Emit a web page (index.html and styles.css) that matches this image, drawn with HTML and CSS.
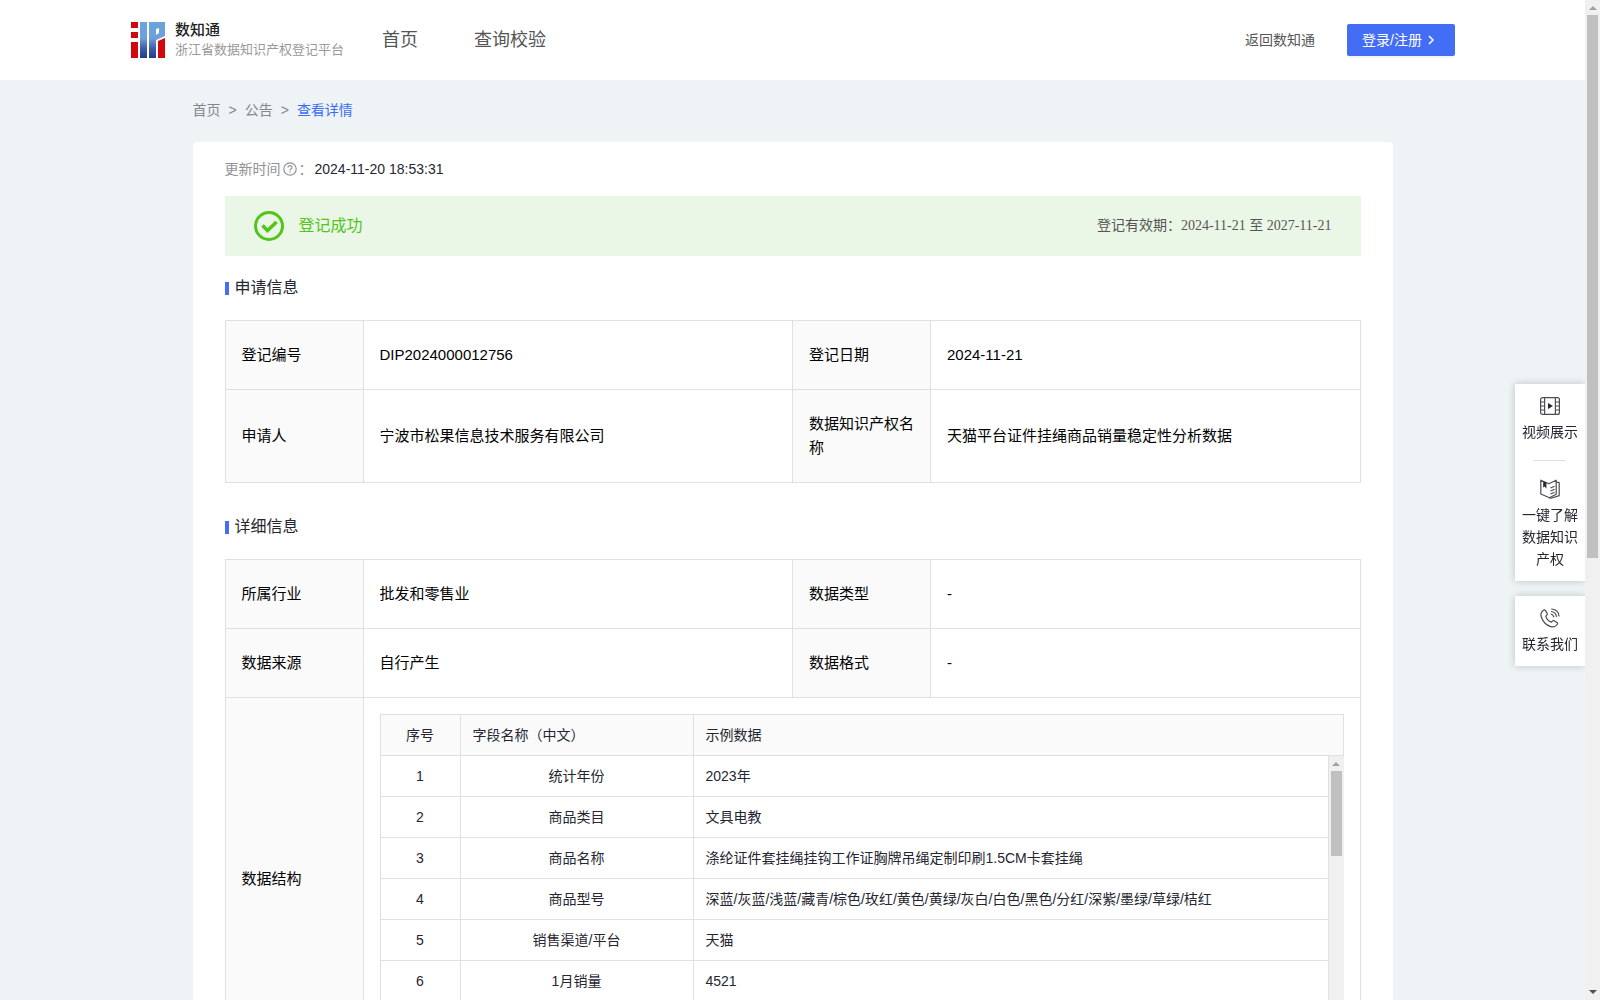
FILE: index.html
```html
<!DOCTYPE html>
<html lang="zh-CN">
<head>
    <meta charset="UTF-8">
    <meta name="viewport" content="width=device-width, initial-scale=1.0">
    <title>浙江省数据知识产权登记平台</title>
    <link rel="stylesheet" href="styles.css">
</head>
<body>
    <div class="window">
        <div class="page">
            <!-- Header -->
            <header class="header">
                <a class="logo" href="#">
                    <svg width="34" height="36" viewBox="0 0 34 36">
                        <defs>
                            <linearGradient id="blue" x1="0" y1="0" x2="0" y2="1">
                                <stop offset="0" stop-color="#6ba3dd"/>
                                <stop offset="0.45" stop-color="#6f9fd8"/>
                                <stop offset="0.75" stop-color="#3a5ba8"/>
                                <stop offset="1" stop-color="#263c86"/>
                            </linearGradient>
                        </defs>
                        <path fill="#d3080f" d="M0 0h7v6H0zM0 10h7v6H0zM0 20h7v16H0zM27 19l7-3v20h-7z"/>
                        <path fill="url(#blue)" d="M9 0h7v36H9zM18 0h16v14l-9 4v18h-7zM25 7v6l3-2V6z" fill-rule="evenodd"/>
                    </svg>
                    <span class="logo-text">
                        <strong>数知通</strong>
                        <span>浙江省数据知识产权登记平台</span>
                    </span>
                </a>
                <nav class="nav">
                    <a href="#">首页</a>
                    <a href="#">查询校验</a>
                </nav>
                <div class="user">
                    <a href="#">返回数知通</a>
                    <button type="button" class="login">登录/注册
                        <svg width="8" height="10" viewBox="0 0 8 10"><path d="M2 1l4 4-4 4" fill="none" stroke="#fff" stroke-width="1.5"/></svg>
                    </button>
                </div>
            </header>

            <main class="container">
                <!-- Breadcrumb -->
                <div class="breadcrumb">
                    <a href="#">首页</a><span>&gt;</span><a href="#">公告</a><span>&gt;</span><a href="#" class="current">查看详情</a>
                </div>

                <div class="card">
                    <div class="update">
                        <span>更新时间</span>
                        <svg width="14" height="14" viewBox="0 0 14 14" fill="none" stroke="#909297" stroke-width="1.2">
                            <circle cx="7" cy="7" r="6.2"/>
                            <path d="M5 5.6c0-2.6 4-2.6 4 0C9 7 7 6.900 7 8.500"/>
                            <path d="M7 9.500v1.200"/>
                        </svg>
                        <span>：</span>
                        <time>2024-11-20 18:53:31</time>
                    </div>

                    <div class="banner">
                        <svg width="30" height="30" viewBox="0 0 30 30" fill="none" stroke="#52c41a">
                            <circle cx="15" cy="15" r="13.500" stroke-width="3"/>
                            <path d="M8.500 14.500l5 5 9-8.500" stroke-width="3.600"/>
                        </svg>
                        <span class="status">登记成功</span>
                        <span class="validity">登记有效期：<span>2024-11-21 至 2027-11-21</span></span>
                    </div>

                    <!-- Application info -->
                    <h2>申请信息</h2>
                    <table class="info">
                        <colgroup><col class="label"><col><col class="label"><col></colgroup>
                        <tr>
                            <th>登记编号</th>
                            <td>DIP2024000012756</td>
                            <th>登记日期</th>
                            <td>2024-11-21</td>
                        </tr>
                        <tr>
                            <th>申请人</th>
                            <td>宁波市松果信息技术服务有限公司</td>
                            <th>数据知识产权名称</th>
                            <td>天猫平台证件挂绳商品销量稳定性分析数据</td>
                        </tr>
                    </table>

                    <!-- Detail info -->
                    <h2>详细信息</h2>
                    <table class="info">
                        <colgroup><col class="label"><col><col class="label"><col></colgroup>
                        <tr>
                            <th>所属行业</th>
                            <td>批发和零售业</td>
                            <th>数据类型</th>
                            <td>-</td>
                        </tr>
                        <tr>
                            <th>数据来源</th>
                            <td>自行产生</td>
                            <th>数据格式</th>
                            <td>-</td>
                        </tr>
                        <tr>
                            <th>数据结构</th>
                            <td colspan="3" class="nested">
                                <table class="fields fields-head">
                                    <colgroup><col class="no"><col class="name"><col></colgroup>
                                    <tr><th class="center">序号</th><th>字段名称（中文）</th><th>示例数据</th></tr>
                                </table>
                                <div class="fields-body">
                                    <table class="fields">
                                        <colgroup><col class="no"><col class="name"><col></colgroup>
                                        <tr><td>1</td><td>统计年份</td><td>2023年</td></tr>
                                        <tr><td>2</td><td>商品类目</td><td>文具电教</td></tr>
                                        <tr><td>3</td><td>商品名称</td><td>涤纶证件套挂绳挂钩工作证胸牌吊绳定制印刷1.5CM卡套挂绳</td></tr>
                                        <tr><td>4</td><td>商品型号</td><td>深蓝/灰蓝/浅蓝/藏青/棕色/玫红/黄色/黄绿/灰白/白色/黑色/分红/深紫/墨绿/草绿/桔红</td></tr>
                                        <tr><td>5</td><td>销售渠道/平台</td><td>天猫</td></tr>
                                        <tr><td>6</td><td>1月销量</td><td>4521</td></tr>
                                    </table>
                                    <div class="scrollbar">
                                        <i class="arrow up"></i>
                                        <i class="thumb thumb-small"></i>
                                    </div>
                                </div>
                            </td>
                        </tr>
                    </table>
                </div>
            </main>
        </div>

        <div class="scrollbar">
            <i class="arrow up"></i>
            <i class="thumb"></i>
            <i class="arrow down"></i>
        </div>

        <!-- Floating side menu -->
        <aside class="side">
            <div class="side-box">
                <a href="#">
                    <svg width="20" height="20" viewBox="0 0 20 20" fill="none" stroke="#4b4c55" stroke-width="1.200">
                        <rect x="0.600" y="1.600" width="18.800" height="16.800" rx="2"/>
                        <path d="M4.600 2v16M15.400 2v16M1 6h3.600M1 10h3.600M1 14h3.600M15.400 6H19M15.400 10H19M15.400 14H19"/>
                        <path d="M8 7l5 3-5 3z" fill="#252631" stroke="none"/>
                    </svg>
                    <span>视频展示</span>
                </a>
                <hr>
                <a href="#">
                    <svg width="20" height="20" viewBox="0 0 20 20" fill="none" stroke="#4b4c55" stroke-width="1.200" stroke-linejoin="round">
                        <path d="M.8 1.200l8 3.600 7.400-3.600v14L9.500 18.800.8 15z"/>
                        <path d="M16.200 3.200l3 .4v13l-8 2.600-1.700-.4M10.500 9l4-1.800M10.500 12l4-1.800M10.500 15l4-1.800"/>
                        <path d="M3.200 2.200v6.300l1.600-1 1.600 2.200V3.600z" fill="#252631" stroke="none"/>
                    </svg>
                    <span>一键了解数据知识产权</span>
                </a>
            </div>
            <div class="side-box">
                <a href="#">
                    <svg width="20" height="20" viewBox="0 0 20 20" fill="none" stroke="#4b4c55" stroke-width="1.200" stroke-linecap="round" stroke-linejoin="round">
                        <path d="M3.400 2.300C1 4 .4 6.500 1.400 9.300c1.500 4.300 5.200 8 9.300 9.300 2.800.9 5-.1 6.500-2.100.6-.8.4-1.500-.3-2l-2.700-1.700c-.7-.4-1.300-.3-1.800.3l-.9 1c-2.700-.8-5-3.300-5.800-6l1.100-1c.6-.5.7-1.100.3-1.800L5.500 2.600c-.5-.8-1.300-.9-2.100-.3z"/>
                        <path d="M11.300 6.200c1.300.4 2.100 1.300 2.400 2.600M11.500 3.500c2.800.5 4.500 2.200 4.900 4.900M11.700 1c4.200.4 6.900 3 7.300 7"/>
                    </svg>
                    <span>联系我们</span>
                </a>
            </div>
        </aside>
    </div>
</body>
</html>
```
FILE: styles.css
```css
* {
    box-sizing: border-box;
}

body {
    margin: 0;
    font-family: "Liberation Sans", "Noto Sans CJK SC", sans-serif;
    font-size: 14px;
    line-height: 22px;
    color: #252631;
}

a {
    color: inherit;
    text-decoration: none;
}

svg {
    flex: none;
    display: block;
}

.window {
    display: flex;
    height: 100vh;
    overflow: hidden;
}

.page {
    flex: 1;
    min-width: 0;
    overflow: hidden;
    background: #eef3f6;
}

/* header */
.header {
    display: flex;
    align-items: center;
    height: 80px;
    padding: 0 130px 0 131px;
    background: #fff;
    color: #555;
}

.logo {
    display: flex;
    align-items: center;
    gap: 10px;
}

.logo-text {
    display: flex;
    flex-direction: column;
    font-size: 13px;
    line-height: 20px;
    color: #999;
}

.logo-text strong {
    font-size: 15px;
    font-weight: 500;
    color: #222;
}

.nav {
    display: flex;
    gap: 56px;
    margin-left: 38px;
    font-size: 18px;
}

.user {
    display: flex;
    align-items: center;
    gap: 32px;
    margin-left: auto;
}

.login {
    display: flex;
    align-items: center;
    gap: 5px;
    width: 108px;
    height: 32px;
    padding: 0 15px;
    border: none;
    border-radius: 2px;
    background: #446df6;
    box-shadow: 0 2px 0 rgba(0, 0, 0, 0.04);
    color: #fff;
    font: inherit;
    white-space: nowrap;
    cursor: pointer;
}

/* content */
.container {
    max-width: 1200px;
    margin: 0 auto;
}

.breadcrumb {
    padding: 19px 0 21px;
    color: #85878c;
}

.breadcrumb span {
    margin: 0 8px;
}

.breadcrumb .current {
    color: #3b6cf5;
}

.card {
    padding: 16px 32px;
    border-radius: 4px;
    background: #fff;
}

.update {
    display: flex;
    align-items: center;
    gap: 2px;
    color: #909297;
}

.update time {
    color: #252631;
}

.banner {
    display: flex;
    align-items: center;
    height: 60px;
    margin: 16px 0 21px;
    padding: 0 29px;
    background: #ebf7e6;
}

.status {
    margin-left: 15px;
    font-size: 16px;
    color: #52c41a;
}

.validity {
    margin-left: auto;
    font-family: "Liberation Serif", "Noto Sans CJK SC", serif;
    color: #555;
}

h2 {
    display: flex;
    align-items: center;
    gap: 6px;
    margin: 0 0 21px;
    font-size: 16px;
    font-weight: 400;
    line-height: 22px;
}

h2::before {
    content: "";
    width: 4px;
    height: 13px;
    background: #446df6;
}

table {
    width: 100%;
    border-collapse: collapse;
    table-layout: fixed;
}

th, td {
    border: 1px solid #e0e0e0;
    font-weight: 400;
    text-align: left;
}

th {
    background: #fafafa;
}

.info {
    margin-bottom: 33px;
    font-size: 15px;
    line-height: 24px;
    color: #000;
}

.info .label {
    width: 138px;
}

.info th, .info td {
    padding: 22px 16px;
}

.info .nested {
    padding: 16px;
}

/* field list */
.fields {
    font-size: 14px;
    line-height: 22px;
    color: #252631;
}

.fields .no {
    width: 80px;
}

.fields .name {
    width: 233px;
}

.fields th, .fields td {
    padding: 9px 12px;
}

.fields td:nth-child(-n+2), .fields .center {
    text-align: center;
}

.fields-body {
    display: flex;
    align-items: flex-start;
    height: 287px;
    overflow: hidden;
}

.fields-body .fields {
    flex: 1;
}

.fields-body tr:first-child td {
    border-top: none;
}

/* scrollbars */
.scrollbar {
    flex: none;
    display: flex;
    flex-direction: column;
    align-items: center;
    width: 15px;
    height: 100%;
    padding: 6px 0;
    background: #f0f0f0;
}

.arrow {
    border: 4px solid transparent;
}

.up {
    border-top: none;
    border-bottom-color: #a0a0a0;
}

.down {
    margin-top: auto;
    border-bottom: none;
    border-top-color: #505050;
}

.thumb {
    width: 11px;
    height: 55%;
    margin-top: 5px;
    background: #c0c0c0;
}

.thumb-small {
    height: 85px;
}

/* side menu */
.side {
    position: fixed;
    top: 384px;
    right: 15px;
    width: 70px;
    clip-path: inset(-20px 0 -20px -20px);
}

.side-box {
    margin-bottom: 15px;
    background: #fff;
    box-shadow: 0 0 8px rgba(0, 0, 0, 0.2);
}

.side-box a {
    display: flex;
    flex-direction: column;
    align-items: center;
    gap: 5px;
    padding: 12px 7px 11px;
    text-align: center;
}

.side-box hr {
    width: 32px;
    height: 1px;
    margin: 6px auto;
    border: none;
    background: #ddd;
}
```
